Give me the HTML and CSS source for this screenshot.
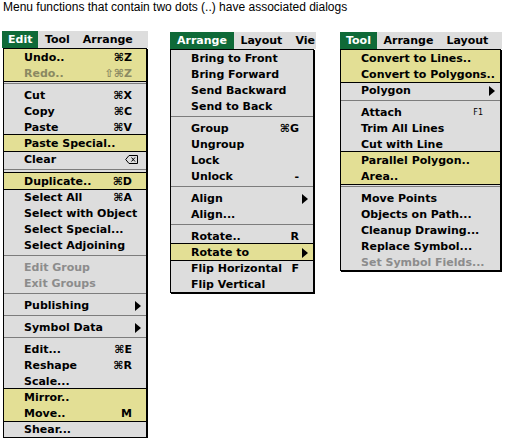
FILE: index.html
```html
<!DOCTYPE html>
<html>
<head>
<meta charset="utf-8">
<link rel="stylesheet" href="styles.css">
</head>
<body>
<p class="caption">Menu functions that contain two dots (..) have associated dialogs</p>
<div class="menus">
  <div class="col col-edit">
    <div class="menubar">
      <span class="title active">Edit</span><span class="title">Tool</span><span class="title">Arrange</span>
    </div>
    <div class="menu">
      <div class="hl">
        <div class="item"><span>Undo..</span><span class="key">⌘Z</span></div>
        <div class="item dis"><span>Redo..</span><span class="key">⇧⌘Z</span></div>
      </div>
      <div class="sep"></div>
      <div class="item"><span>Cut</span><span class="key">⌘X</span></div>
      <div class="item"><span>Copy</span><span class="key">⌘C</span></div>
      <div class="item"><span>Paste</span><span class="key">⌘V</span></div>
      <div class="hl">
        <div class="item"><span>Paste Special..</span></div>
      </div>
      <div class="item"><span>Clear</span><svg class="del" width="13" height="9" viewBox="0 0 13 9"><path d="M4 0.5H12.5V8.5H4L0.7 4.5Z" fill="none" stroke="#000"/><path d="M6.5 2.5L10 6.5M10 2.5L6.5 6.5" stroke="#000"/></svg></div>
      <div class="sep"></div>
      <div class="hl">
        <div class="item"><span>Duplicate..</span><span class="key">⌘D</span></div>
      </div>
      <div class="item"><span>Select All</span><span class="key">⌘A</span></div>
      <div class="item"><span>Select with Object</span></div>
      <div class="item"><span>Select Special...</span></div>
      <div class="item"><span>Select Adjoining</span></div>
      <div class="sep"></div>
      <div class="item dis"><span>Edit Group</span></div>
      <div class="item dis"><span>Exit Groups</span></div>
      <div class="sep"></div>
      <div class="item sub"><span>Publishing</span><span class="arrow"></span></div>
      <div class="sep"></div>
      <div class="item sub"><span>Symbol Data</span><span class="arrow"></span></div>
      <div class="sep"></div>
      <div class="item"><span>Edit...</span><span class="key">⌘E</span></div>
      <div class="item"><span>Reshape</span><span class="key">⌘R</span></div>
      <div class="item"><span>Scale...</span></div>
      <div class="hl">
        <div class="item"><span>Mirror..</span></div>
        <div class="item"><span>Move..</span><span class="key">M</span></div>
      </div>
      <div class="item"><span>Shear...</span></div>
    </div>
  </div>

  <div class="col col-arrange">
    <div class="menubar">
      <span class="title active">Arrange</span><span class="title">Layout</span><span class="title last">Vie</span>
    </div>
    <div class="menu">
      <div class="item"><span>Bring to Front</span></div>
      <div class="item"><span>Bring Forward</span></div>
      <div class="item"><span>Send Backward</span></div>
      <div class="item"><span>Send to Back</span></div>
      <div class="sep"></div>
      <div class="item"><span>Group</span><span class="key">⌘G</span></div>
      <div class="item"><span>Ungroup</span></div>
      <div class="item"><span>Lock</span></div>
      <div class="item"><span>Unlock</span><span class="key">-</span></div>
      <div class="sep"></div>
      <div class="item sub"><span>Align</span><span class="arrow"></span></div>
      <div class="item"><span>Align...</span></div>
      <div class="sep"></div>
      <div class="item"><span>Rotate..</span><span class="key">R</span></div>
      <div class="hl">
        <div class="item sub"><span>Rotate to</span><span class="arrow"></span></div>
      </div>
      <div class="item"><span>Flip Horizontal</span><span class="key">F</span></div>
      <div class="item"><span>Flip Vertical</span></div>
    </div>
  </div>

  <div class="col col-tool">
    <div class="menubar">
      <span class="title active">Tool</span><span class="title">Arrange</span><span class="title">Layout</span>
    </div>
    <div class="menu">
      <div class="hl">
        <div class="item"><span>Convert to Lines..</span></div>
        <div class="item"><span>Convert to Polygons..</span></div>
      </div>
      <div class="item sub"><span>Polygon</span><span class="arrow"></span></div>
      <div class="sep"></div>
      <div class="item fkey"><span>Attach</span><span class="small">F1</span></div>
      <div class="item"><span>Trim All Lines</span></div>
      <div class="item"><span>Cut with Line</span></div>
      <div class="hl">
        <div class="item"><span>Parallel Polygon..</span></div>
        <div class="item"><span>Area..</span></div>
      </div>
      <div class="sep"></div>
      <div class="item"><span>Move Points</span></div>
      <div class="item"><span>Objects on Path...</span></div>
      <div class="item"><span>Cleanup Drawing...</span></div>
      <div class="item"><span>Replace Symbol...</span></div>
      <div class="item dis"><span>Set Symbol Fields...</span></div>
    </div>
  </div>
</div>
</body>
</html>
```

FILE: styles.css
```css
* { box-sizing: border-box; }

body {
  margin: 0;
  background: #ffffff;
  font-family: "DejaVu Sans", sans-serif;
}

.caption {
  margin: 0;
  height: 31px;
  padding: 1px 0 0 3px;
  font: 12px/13px "Liberation Sans", Arial, sans-serif;
  color: #000;
}

.menus {
  display: flex;
  align-items: flex-start;
  padding-left: 2px;
}

.col-edit { width: 146px; }
.col-arrange { width: 146px; margin-left: 22px; margin-top: 1px; }
.col-tool { width: 162px; margin-left: 24px; margin-top: 1px; }

.menubar {
  display: flex;
  height: 17px;
  background: #dddddd;
  overflow: hidden;
  white-space: nowrap;
  font: bold 11px/17px "DejaVu Sans", sans-serif;
  color: #000;
}

.title { padding: 0 6.5px; flex: none; }
.title.active { padding: 0 6px; background: #0f6a38; color: #fff; }
.col-arrange .title.active { padding: 0 7px; }
.title.last { padding-right: 0; }

.menu {
  background: #dddddd;
  border: 1px solid #000;
  box-shadow: 1px 1px 0 #000;
  font: bold 11px/16px "DejaVu Sans", sans-serif;
  color: #000;
}

.col-edit .menu { width: 144px; margin-left: 1px; }
.col-arrange .menu { width: 144px; }
.col-tool .menu { width: 161px; }

.item {
  display: flex;
  justify-content: space-between;
  align-items: stretch;
  height: 16px;
  padding: 1px 14px 0 20px;
  white-space: nowrap;
}

.item.sub { padding-right: 5px; }
.item.fkey { padding-right: 17px; }

.dis { color: #8c8c8c; }
.hl .dis { color: #8b8962; }

.hl {
  position: relative;
  background: #e3df95;
  box-shadow: 0 0 0 1px #000;
}

.sep {
  height: 6px;
  padding-top: 2px;
}
.sep::before {
  content: "";
  display: block;
  height: 1px;
  background: #7c7c7c;
}

.arrow {
  align-self: center;
  width: 0;
  height: 0;
  border-left: 6px solid #000;
  border-top: 5px solid transparent;
  border-bottom: 5px solid transparent;
}

.del { align-self: center; margin-right: -6px; }

.small {
  font: 8px/16px "DejaVu Sans", sans-serif;
}
```
